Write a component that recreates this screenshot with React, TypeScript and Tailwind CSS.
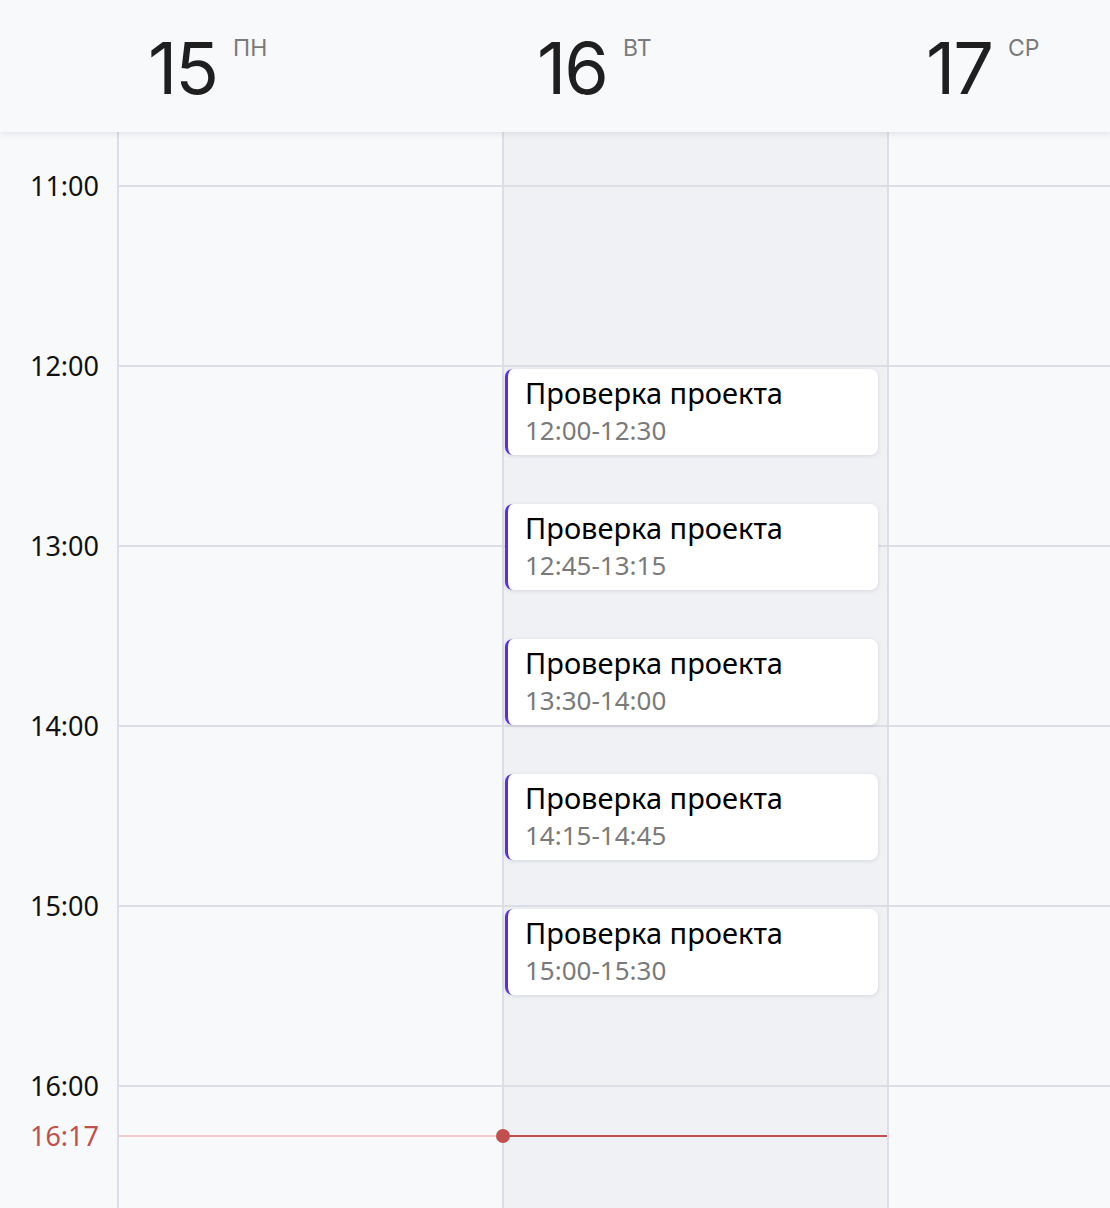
import React from 'react';

interface CalEvent {
  title: string;
  start: number; // minutes from 11:00
  end: number;
}

const HOUR = 180;
const OFFSET = 53; // px from top of grid to 11:00 line

const days = [
  { num: '15', wd: 'ПН', today: false },
  { num: '16', wd: 'ВТ', today: true },
  { num: '17', wd: 'СР', today: false },
];

const hours = ['11:00', '12:00', '13:00', '14:00', '15:00', '16:00'];

const toMin = (t: string) => {
  const [h, m] = t.split(':').map(Number);
  return (h - 11) * 60 + m;
};

const events: CalEvent[] = [
  ['12:00', '12:30'],
  ['12:45', '13:15'],
  ['13:30', '14:00'],
  ['14:15', '14:45'],
  ['15:00', '15:30'],
].map(([s, e]) => ({ title: 'Проверка проекта', start: toMin(s), end: toMin(e) }));

const fmt = (m: number) => {
  const h = 11 + Math.floor(m / 60);
  const mm = m % 60;
  return `${h}:${mm.toString().padStart(2, '0')}`;
};

const nowMin = toMin('16:17');
const nowTop = OFFSET + (nowMin / 60) * HOUR;

const EventCard: React.FC<{ ev: CalEvent }> = ({ ev }) => {
  const top = OFFSET + (ev.start / 60) * HOUR + 4;
  const height = ((ev.end - ev.start) / 60) * HOUR - 4;
  return (
    <div
      className="absolute left-[1px] right-[9px] bg-white rounded-lg border-l-[3px] border-[#5a2fe0] shadow-[0_1px_4px_rgba(20,20,40,0.12)] pl-[17px] pt-[4px]"
      style={{ top, height }}
    >
      <div className="text-[29px] leading-[40px] text-black">{ev.title}</div>
      <div className="text-[26px] leading-[34px] text-[#7a7a7a]">
        {fmt(ev.start)}-{fmt(ev.end)}
      </div>
    </div>
  );
};

export default function App() {
  return (
    <div className="w-[1110px] h-[1208px] overflow-hidden bg-[#f8f9fb] font-['Noto_Sans',sans-serif] flex flex-col">
      {/* header */}
      <div className="relative z-10 h-[132px] shrink-0 bg-[#f8f9fb] shadow-[0_2px_6px_rgba(30,30,60,0.1)] flex">
        {days.map((d) => (
          <div key={d.num} className="w-[389px] shrink-0 pl-[148px] pt-[26px] flex items-start font-['Inter',sans-serif]">
            <span className="text-[72px] leading-[84px] text-[#1f1f1f] tracking-[-2px]">{d.num}</span>
            <span className="ml-[16px] mt-[8px] text-[23px] leading-[28px] text-[#7a7a7a]">{d.wd}</span>
          </div>
        ))}
      </div>

      {/* body */}
      <div className="relative flex flex-1">
        {/* time column */}
        <div className="w-[117px] shrink-0 relative">
          {hours.map((h, i) => (
            <div
              key={h}
              className="absolute right-[18px] text-[27px] leading-[30px] text-[#111] -translate-y-1/2"
              style={{ top: OFFSET + i * HOUR + 1 }}
            >
              {h}
            </div>
          ))}
          <div
            className="absolute right-[18px] text-[27px] leading-[30px] text-[#c0504d] -translate-y-1/2"
            style={{ top: nowTop }}
          >
            16:17
          </div>
        </div>

        {days.map((d) => (
          <div
            key={d.num}
            className={`relative w-[385px] shrink-0 border-l-2 border-[#dcdde6] ${d.today ? 'bg-[#f0f1f5]' : ''}`}
          >
            <div className="h-[53px]" />
            {hours.map((h) => (
              <div key={h} className="h-[180px] border-t-2 border-[#dcdde6]" />
            ))}
            {d.today && events.map((ev, i) => <EventCard key={i} ev={ev} />)}
            {d.num === '15' && (
              <div className="absolute left-0 right-0 h-[2px] bg-[#f3caca]" style={{ top: nowTop - 1 }} />
            )}
            {d.today && (
              <>
                <div className="absolute left-0 right-0 h-[2px] bg-[#c0504d]" style={{ top: nowTop - 1 }} />
                <div
                  className="absolute left-[-8px] w-[14px] h-[14px] rounded-full bg-[#c0504d]"
                  style={{ top: nowTop - 7 }}
                />
              </>
            )}
          </div>
        ))}
      </div>
    </div>
  );
}
